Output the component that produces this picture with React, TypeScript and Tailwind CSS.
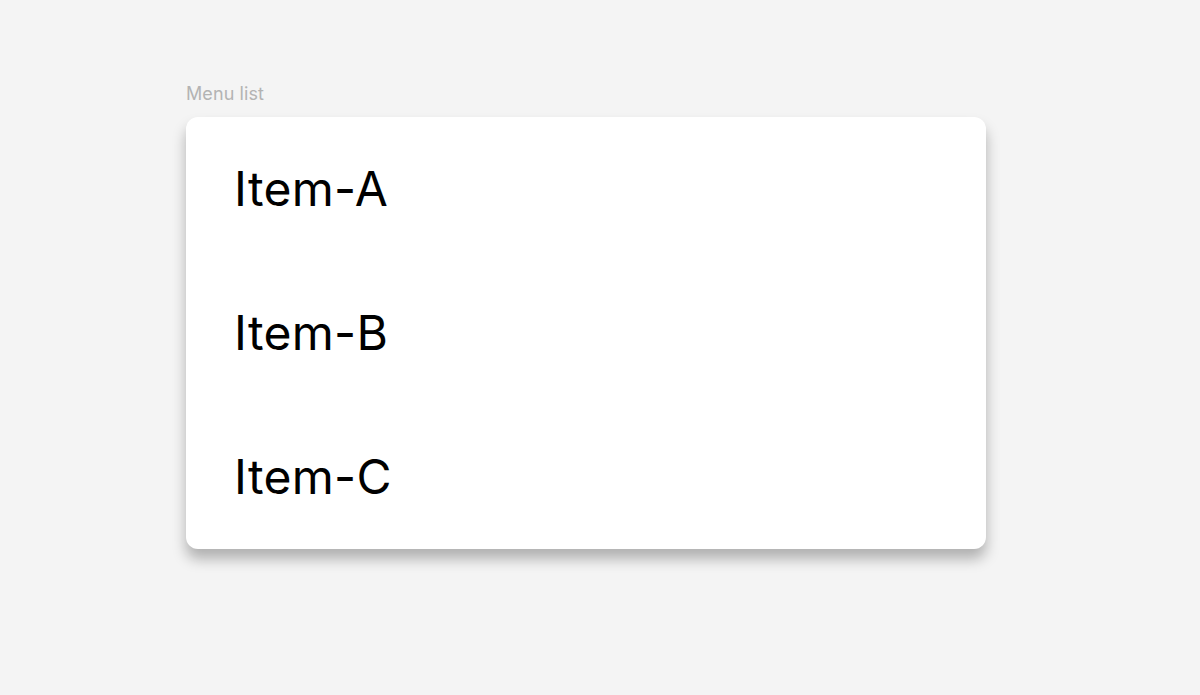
const items = ["Item-A", "Item-B", "Item-C"];

export default function App() {
  return (
    <div className="min-h-[695px] w-full bg-[#f4f4f4] font-['Inter',sans-serif]">
      <div className="pl-[186px] pt-[81px]">
        <p className="text-[18px] leading-[26px] tracking-[0.1px] text-[#b3b3b3]">Menu list</p>
        <ul className="mt-[10px] w-[800px] rounded-[12px] bg-white shadow-[0_10px_14px_rgba(0,0,0,0.28)]">
          {items.map((item) => (
            <li
              key={item}
              className="flex h-[144px] items-center pl-[48px] text-[48px] tracking-[0.3px] text-black"
            >
              {item}
            </li>
          ))}
        </ul>
      </div>
    </div>
  );
}
